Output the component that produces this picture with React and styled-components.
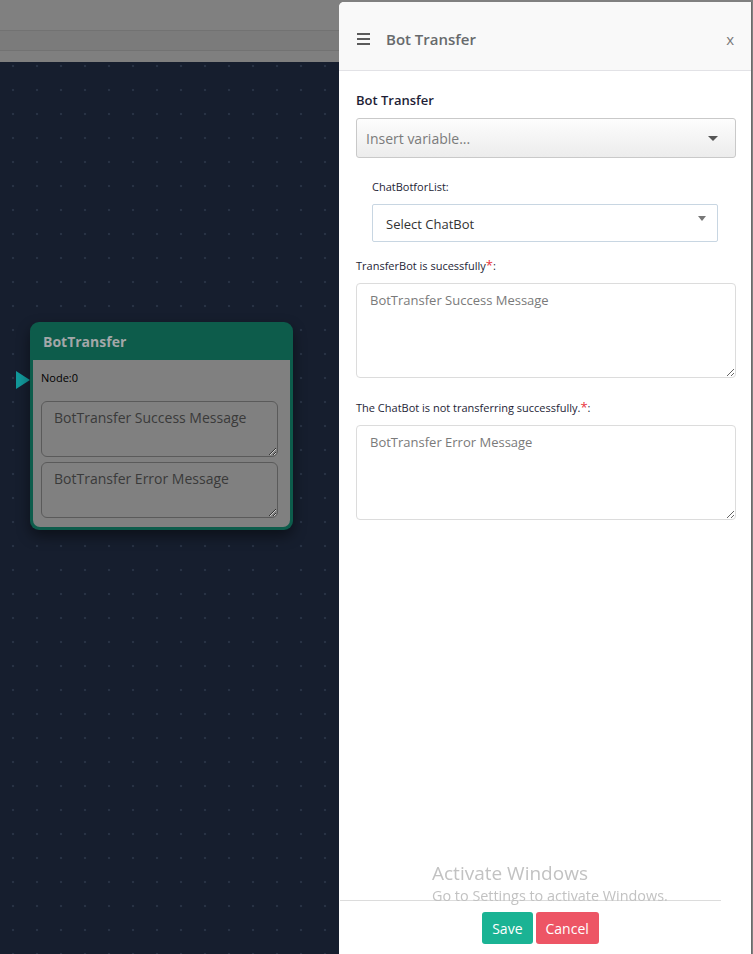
import * as React from "react";
import styled, { createGlobalStyle } from "styled-components";

const GlobalStyle = createGlobalStyle`
  html, body {
    margin: 0;
    padding: 0;
    height: 100%;
    background: #808080;
    font-family: "Open Sans", "Liberation Sans", sans-serif;
  }
  * {
    box-sizing: border-box;
  }
`;

const Page = styled.div`
  display: flex;
  width: 753px;
  height: 954px;
  background: #808080;
  overflow: hidden;
`;

const LeftSide = styled.div`
  display: flex;
  flex-direction: column;
  width: 339px;
  height: 100%;
`;

const TopBand = styled.div`
  height: ${(p) => p.h}px;
  background: ${(p) => p.bg};
  border-bottom: ${(p) => (p.line ? "1px solid #727272" : "none")};
`;

const Canvas = styled.div`
  position: relative;
  flex: 1;
  background-color: #161e2e;
  background-image: radial-gradient(circle, #283244 1px, transparent 1.6px);
  background-size: 24px 24px;
  background-position: 1px 16px;
`;

const Port = styled.div`
  position: absolute;
  left: 16px;
  top: 309px;
  width: 0;
  height: 0;
  border-top: 9px solid transparent;
  border-bottom: 9px solid transparent;
  border-left: 14px solid #12999b;
`;

const Node = styled.div`
  position: absolute;
  left: 30px;
  top: 260px;
  width: 263px;
  background: #0d5c4b;
  border-radius: 9px;
  padding: 0 3px 3px;
  box-shadow: 0 6px 14px rgba(0, 0, 0, 0.45);
`;

const NodeTitle = styled.div`
  height: 38px;
  display: flex;
  align-items: center;
  padding-left: 10px;
  font-size: 14px;
  font-weight: 700;
  color: #a3a7a8;
`;

const NodeBody = styled.div`
  background: #808080;
  border-radius: 0 0 7px 7px;
  padding: 10px 11px 9px 8px;
  display: flex;
  flex-direction: column;
`;

const NodeLabel = styled.div`
  font-size: 11px;
  color: #000;
  margin-bottom: 16px;
  font-family: "Open Sans", sans-serif;
`;

const NodeText = styled.textarea`
  width: 237px;
  height: 56px;
  margin: 0 0 5px;
  padding: 6px 12px;
  background: #808080;
  border: 1px solid #5a5a5a;
  border-radius: 6px;
  font-family: "Open Sans", sans-serif;
  font-size: 14px;
  color: #333;
  resize: vertical;
  &::placeholder {
    color: #3a3a3a;
  }
  &:last-child {
    margin-bottom: 0;
  }
`;

const Panel = styled.div`
  margin-top: 2px;
  width: 413px;
  height: 952px;
  background: #fff;
  border-top-left-radius: 5px;
  border-right: 1px solid #6a6a6a;
  display: flex;
  flex-direction: column;
`;

const PanelHeader = styled.div`
  height: 69px;
  flex-shrink: 0;
  background: #f9f9f9;
  border-bottom: 1px solid #e2e2e6;
  border-top-left-radius: 5px;
  display: flex;
  align-items: center;
  padding: 6px 17px 0 18px;
`;

const Burger = styled.div`
  display: flex;
  flex-direction: column;
  gap: 3px;
  margin-right: 16px;
  span {
    display: block;
    width: 13px;
    height: 2px;
    background: #5b5b5b;
  }
`;

const HeaderTitle = styled.div`
  flex: 1;
  font-size: 15px;
  font-weight: 600;
  color: #676a6c;
`;

const CloseX = styled.div`
  font-size: 15px;
  color: #7a7a7a;
  font-family: "Open Sans", sans-serif;
`;

const PanelBody = styled.div`
  flex: 1;
  padding: 20px 15px 0 17px;
  display: flex;
  flex-direction: column;
`;

const Label = styled.div`
  font-size: ${(p) => p.size || 11}px;
  font-weight: ${(p) => p.weight || 400};
  color: #1e1e36;
  margin-bottom: ${(p) => p.mb || 9}px;
  line-height: 18px;
`;

const Star = styled.span`
  color: #e8323c;
  font-size: 13px;
`;

const VariableSelect = styled.div`
  height: 40px;
  border: 1px solid #c9c9c9;
  border-radius: 3px;
  background: linear-gradient(#fdfdfd, #ececec);
  display: flex;
  align-items: center;
  justify-content: space-between;
  padding: 0 17px 0 9px;
  font-size: 14px;
  color: #7b7b7b;
  margin-bottom: 20px;
`;

const Caret = styled.span`
  width: 0;
  height: 0;
  border-left: ${(p) => p.w}px solid transparent;
  border-right: ${(p) => p.w}px solid transparent;
  border-top: ${(p) => p.h}px solid ${(p) => p.color || "#666"};
  margin-top: ${(p) => p.mt || 0}px;
`;

const Indented = styled.div`
  padding: 0 18px 0 16px;
  display: flex;
  flex-direction: column;
`;

const BotSelect = styled.div`
  height: 38px;
  border: 1px solid #c8d6e2;
  border-radius: 2px;
  display: flex;
  align-items: center;
  justify-content: space-between;
  padding: 0 11px 0 13px;
  font-size: 13px;
  color: #333;
  margin-bottom: 14px;
  span:first-child {
    margin-top: 1px;
  }
`;

const Message = styled.textarea`
  width: 380px;
  height: 95px;
  padding: 7px 13px;
  border: 1px solid #dcdcdc;
  border-radius: 4px;
  font-family: "Open Sans", sans-serif;
  font-size: 13px;
  color: #333;
  resize: vertical;
  margin: 0 0 ${(p) => p.mb || 0}px;
  &::placeholder {
    color: #7a7a7a;
  }
`;

const Footer = styled.div`
  flex-shrink: 0;
  padding: 0 30px 10px 1px;
`;

const FooterRule = styled.div`
  border-top: 1px solid #dcdcdc;
  margin-bottom: 11px;
`;

const ButtonRow = styled.div`
  display: flex;
  justify-content: center;
  gap: 3px;
  padding-left: 20px;
`;

const Button = styled.button`
  height: 32px;
  padding: 0 10px;
  border: none;
  border-radius: 3px;
  background: ${(p) => p.bg};
  color: #fff;
  font-family: "Open Sans", sans-serif;
  font-size: 14px;
`;

const Watermark = styled.div`
  position: fixed;
  left: 432px;
  top: 862px;
  color: #c2c2c2;
  font-family: "Open Sans", sans-serif;
  pointer-events: none;
  line-height: 1.2;
  div:first-child {
    font-size: 19px;
  }
  div:last-child {
    font-size: 14.4px;
    margin-top: 2px;
  }
`;

export default function App() {
  return (
    <>
      <GlobalStyle />
      <Page>
        <LeftSide>
          <TopBand h={31} bg="#808080" line />
          <TopBand h={20} bg="#7b7b7b" line />
          <TopBand h={11} bg="#7f7f7f" />
          <Canvas>
            <Port />
            <Node>
              <NodeTitle>BotTransfer</NodeTitle>
              <NodeBody>
                <NodeLabel>Node:0</NodeLabel>
                <NodeText placeholder="BotTransfer Success Message" />
                <NodeText placeholder="BotTransfer Error Message" />
              </NodeBody>
            </Node>
          </Canvas>
        </LeftSide>
        <Panel>
          <PanelHeader>
            <Burger>
              <span />
              <span />
              <span />
            </Burger>
            <HeaderTitle>Bot Transfer</HeaderTitle>
            <CloseX>x</CloseX>
          </PanelHeader>
          <PanelBody>
            <Label size={13} weight={600} mb={9}>
              Bot Transfer
            </Label>
            <VariableSelect>
              <span>Insert variable...</span>
              <Caret w={5} h={5} color="#555" />
            </VariableSelect>
            <Indented>
              <Label mb={8}>ChatBotforList:</Label>
              <BotSelect>
                <span>Select ChatBot</span>
                <Caret w={4} h={5} color="#777" mt={-10} />
              </BotSelect>
            </Indented>
            <Label mb={8}>
              TransferBot is sucessfully<Star>*</Star>:
            </Label>
            <Message placeholder="BotTransfer Success Message" mb={20} />
            <Label mb={8}>
              The ChatBot is not transferring successfully.<Star>*</Star>:
            </Label>
            <Message placeholder="BotTransfer Error Message" />
          </PanelBody>
          <Footer>
            <FooterRule />
            <ButtonRow>
              <Button bg="#1ab394">Save</Button>
              <Button bg="#ed5565">Cancel</Button>
            </ButtonRow>
          </Footer>
        </Panel>
      </Page>
      <Watermark>
        <div>Activate Windows</div>
        <div>Go to Settings to activate Windows.</div>
      </Watermark>
    </>
  );
}
